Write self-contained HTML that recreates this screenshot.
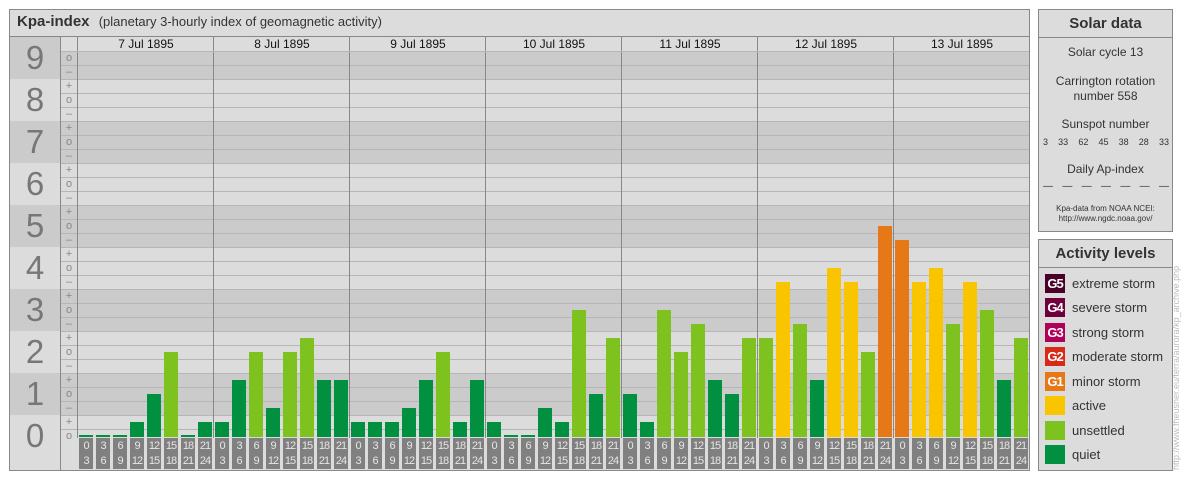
<!DOCTYPE html>
<html><head><meta charset="utf-8"><style>
*{margin:0;padding:0;box-sizing:border-box}
body{width:1184px;height:480px;background:#fff;position:relative;font-family:"Liberation Sans",sans-serif;overflow:hidden}
.abs{position:absolute}
.panel{position:absolute;background:#dcdcdc;border:1px solid #888}
.band{position:absolute;left:10px;width:1019px;height:42px}
.d{background:#cbcbcb}.l{background:#dcdcdc}
.num{position:absolute;left:10px;width:50px;text-align:center;font-size:33px;color:#777;line-height:42px}
.hl{position:absolute;left:61px;width:968px;height:1px;background:#b6b6b6}
.sg{position:absolute;left:61px;width:16px;text-align:center;font-size:11px;color:#888;line-height:14px}
.vl{position:absolute;top:37px;width:1px;height:401px;background:#888}
.date{position:absolute;top:37px;width:136px;text-align:center;font-size:12px;line-height:15px;color:#111}
#bars{position:absolute;left:78px;top:37px;width:952px;height:400px;display:flex;align-items:flex-end}
#bars div{width:14px;margin-left:1px;margin-right:2px}
.q{background:#009040}.u{background:#7dc21f}.a{background:#f9c500}.o{background:#e67817}
#tl{position:absolute;left:78px;top:438px;width:952px;height:31px;display:flex}
#tl div{width:14px;margin-left:1px;margin-right:2px;background:#808080;color:#e6e6e6;font-size:11px;line-height:15px;text-align:center;letter-spacing:-1px;padding-top:1px}
.rt{font-size:12px;color:#333;text-align:center}
.lg{position:absolute;left:1045px;width:20px;height:19px;color:#fff;font-size:13px;font-weight:bold;line-height:19px;text-align:center;letter-spacing:-1px}
.lt{position:absolute;left:1072px;font-size:13px;color:#333;line-height:19px}
</style></head><body>
<div class="panel" style="left:9px;top:9px;width:1021px;height:462px"></div>
<div class="abs" style="left:17px;top:13px;font-size:15px;font-weight:bold;color:#333">Kpa-index <span style="font-weight:normal;font-size:13px;margin-left:5px">(planetary 3-hourly index of geomagnetic activity)</span></div>
<div class="abs" style="left:10px;top:36px;width:1019px;height:1px;background:#888"></div>
<div class="band d" style="top:37px"></div>
<div class="band l" style="top:79px"></div>
<div class="band d" style="top:121px"></div>
<div class="band l" style="top:163px"></div>
<div class="band d" style="top:205px"></div>
<div class="band l" style="top:247px"></div>
<div class="band d" style="top:289px"></div>
<div class="band l" style="top:331px"></div>
<div class="band d" style="top:373px"></div>
<div class="band l" style="top:415px;height:55px"></div>
<div class="num" style="top:37px">9</div><div class="num" style="top:79px">8</div><div class="num" style="top:121px">7</div><div class="num" style="top:163px">6</div><div class="num" style="top:205px">5</div><div class="num" style="top:247px">4</div><div class="num" style="top:289px">3</div><div class="num" style="top:331px">2</div><div class="num" style="top:373px">1</div><div class="num" style="top:415px">0</div>
<div class="hl" style="top:51px"></div><div class="hl" style="top:65px"></div><div class="hl" style="top:79px"></div><div class="hl" style="top:93px"></div><div class="hl" style="top:107px"></div><div class="hl" style="top:121px"></div><div class="hl" style="top:135px"></div><div class="hl" style="top:149px"></div><div class="hl" style="top:163px"></div><div class="hl" style="top:177px"></div><div class="hl" style="top:191px"></div><div class="hl" style="top:205px"></div><div class="hl" style="top:219px"></div><div class="hl" style="top:233px"></div><div class="hl" style="top:247px"></div><div class="hl" style="top:261px"></div><div class="hl" style="top:275px"></div><div class="hl" style="top:289px"></div><div class="hl" style="top:303px"></div><div class="hl" style="top:317px"></div><div class="hl" style="top:331px"></div><div class="hl" style="top:345px"></div><div class="hl" style="top:359px"></div><div class="hl" style="top:373px"></div><div class="hl" style="top:387px"></div><div class="hl" style="top:401px"></div><div class="hl" style="top:415px"></div><div class="hl" style="top:429px"></div>
<div class="sg" style="top:51px">o</div><div class="sg" style="top:65px">–</div>
<div class="sg" style="top:79px">+</div><div class="sg" style="top:93px">o</div><div class="sg" style="top:107px">–</div>
<div class="sg" style="top:121px">+</div><div class="sg" style="top:135px">o</div><div class="sg" style="top:149px">–</div>
<div class="sg" style="top:163px">+</div><div class="sg" style="top:177px">o</div><div class="sg" style="top:191px">–</div>
<div class="sg" style="top:205px">+</div><div class="sg" style="top:219px">o</div><div class="sg" style="top:233px">–</div>
<div class="sg" style="top:247px">+</div><div class="sg" style="top:261px">o</div><div class="sg" style="top:275px">–</div>
<div class="sg" style="top:289px">+</div><div class="sg" style="top:303px">o</div><div class="sg" style="top:317px">–</div>
<div class="sg" style="top:331px">+</div><div class="sg" style="top:345px">o</div><div class="sg" style="top:359px">–</div>
<div class="sg" style="top:373px">+</div><div class="sg" style="top:387px">o</div><div class="sg" style="top:401px">–</div>
<div class="sg" style="top:415px">+</div><div class="sg" style="top:429px">o</div>
<div class="vl" style="left:60px;height:433px"></div>
<div class="vl" style="left:77px"></div>
<div class="vl" style="left:213px"></div><div class="vl" style="left:349px"></div><div class="vl" style="left:485px"></div><div class="vl" style="left:621px"></div><div class="vl" style="left:757px"></div><div class="vl" style="left:893px"></div>
<div class="abs" style="left:78px;top:37px;width:951px;height:14px;background:#dcdcdc"></div>
<div class="abs" style="left:61px;top:37px;width:16px;height:14px;background:#dcdcdc"></div>
<div class="vl" style="left:77px;height:14px"></div><div class="vl" style="left:213px;height:14px"></div><div class="vl" style="left:349px;height:14px"></div><div class="vl" style="left:485px;height:14px"></div><div class="vl" style="left:621px;height:14px"></div><div class="vl" style="left:757px;height:14px"></div><div class="vl" style="left:893px;height:14px"></div>
<div class="hl" style="top:51px"></div>
<div class="date" style="left:78px">7 Jul 1895</div><div class="date" style="left:214px">8 Jul 1895</div><div class="date" style="left:350px">9 Jul 1895</div><div class="date" style="left:486px">10 Jul 1895</div><div class="date" style="left:622px">11 Jul 1895</div><div class="date" style="left:758px">12 Jul 1895</div><div class="date" style="left:894px">13 Jul 1895</div>
<div id="bars">
<div class="q" style="height:2px"></div><div class="q" style="height:2px"></div><div class="q" style="height:2px"></div><div class="q" style="height:15px"></div><div class="q" style="height:43px"></div><div class="u" style="height:85px"></div><div class="q" style="height:2px"></div><div class="q" style="height:15px"></div>
<div class="q" style="height:15px"></div><div class="q" style="height:57px"></div><div class="u" style="height:85px"></div><div class="q" style="height:29px"></div><div class="u" style="height:85px"></div><div class="u" style="height:99px"></div><div class="q" style="height:57px"></div><div class="q" style="height:57px"></div>
<div class="q" style="height:15px"></div><div class="q" style="height:15px"></div><div class="q" style="height:15px"></div><div class="q" style="height:29px"></div><div class="q" style="height:57px"></div><div class="u" style="height:85px"></div><div class="q" style="height:15px"></div><div class="q" style="height:57px"></div>
<div class="q" style="height:15px"></div><div class="q" style="height:2px"></div><div class="q" style="height:2px"></div><div class="q" style="height:29px"></div><div class="q" style="height:15px"></div><div class="u" style="height:127px"></div><div class="q" style="height:43px"></div><div class="u" style="height:99px"></div>
<div class="q" style="height:43px"></div><div class="q" style="height:15px"></div><div class="u" style="height:127px"></div><div class="u" style="height:85px"></div><div class="u" style="height:113px"></div><div class="q" style="height:57px"></div><div class="q" style="height:43px"></div><div class="u" style="height:99px"></div>
<div class="u" style="height:99px"></div><div class="a" style="height:155px"></div><div class="u" style="height:113px"></div><div class="q" style="height:57px"></div><div class="a" style="height:169px"></div><div class="a" style="height:155px"></div><div class="u" style="height:85px"></div><div class="o" style="height:211px"></div>
<div class="o" style="height:197px"></div><div class="a" style="height:155px"></div><div class="a" style="height:169px"></div><div class="u" style="height:113px"></div><div class="a" style="height:155px"></div><div class="u" style="height:127px"></div><div class="q" style="height:57px"></div><div class="u" style="height:99px"></div>
</div>
<div id="tl">
<div>0<br>3</div><div>3<br>6</div><div>6<br>9</div><div>9<br>12</div><div>12<br>15</div><div>15<br>18</div><div>18<br>21</div><div>21<br>24</div>
<div>0<br>3</div><div>3<br>6</div><div>6<br>9</div><div>9<br>12</div><div>12<br>15</div><div>15<br>18</div><div>18<br>21</div><div>21<br>24</div>
<div>0<br>3</div><div>3<br>6</div><div>6<br>9</div><div>9<br>12</div><div>12<br>15</div><div>15<br>18</div><div>18<br>21</div><div>21<br>24</div>
<div>0<br>3</div><div>3<br>6</div><div>6<br>9</div><div>9<br>12</div><div>12<br>15</div><div>15<br>18</div><div>18<br>21</div><div>21<br>24</div>
<div>0<br>3</div><div>3<br>6</div><div>6<br>9</div><div>9<br>12</div><div>12<br>15</div><div>15<br>18</div><div>18<br>21</div><div>21<br>24</div>
<div>0<br>3</div><div>3<br>6</div><div>6<br>9</div><div>9<br>12</div><div>12<br>15</div><div>15<br>18</div><div>18<br>21</div><div>21<br>24</div>
<div>0<br>3</div><div>3<br>6</div><div>6<br>9</div><div>9<br>12</div><div>12<br>15</div><div>15<br>18</div><div>18<br>21</div><div>21<br>24</div>
</div>

<div class="panel" style="left:1038px;top:9px;width:135px;height:223px"></div>
<div class="abs" style="left:1039px;top:37px;width:133px;height:1px;background:#888"></div>
<div class="abs rt" style="left:1039px;top:15px;width:133px;font-size:15px;font-weight:bold;color:#333">Solar data</div>
<div class="abs rt" style="left:1039px;top:45px;width:133px">Solar cycle 13</div>
<div class="abs rt" style="left:1039px;top:74px;width:133px;line-height:15px">Carrington rotation<br>number 558</div>
<div class="abs rt" style="left:1039px;top:117px;width:133px">Sunspot number</div>
<div class="abs" style="left:1043px;top:137px;width:126px;display:flex;justify-content:space-between;font-size:9px;color:#333"><span>3</span><span>33</span><span>62</span><span>45</span><span>38</span><span>28</span><span>33</span></div>
<div class="abs rt" style="left:1039px;top:162px;width:133px">Daily Ap-index</div>
<div class="abs" style="left:1043px;top:181px;width:126px;display:flex;justify-content:space-between;font-size:10px;color:#333"><span>—</span><span>—</span><span>—</span><span>—</span><span>—</span><span>—</span><span>—</span></div>
<div class="abs rt" style="left:1039px;top:204px;width:133px;font-size:8px;line-height:10px">Kpa-data from NOAA NCEI:<br>http://www.ngdc.noaa.gov/</div>

<div class="panel" style="left:1038px;top:239px;width:135px;height:232px"></div>
<div class="abs" style="left:1039px;top:267px;width:133px;height:1px;background:#888"></div>
<div class="abs rt" style="left:1039px;top:245px;width:133px;font-size:15px;font-weight:bold;color:#333">Activity levels</div>
<div class="lg" style="top:274px;background:#4a0028">G5</div><div class="lt" style="top:274px">extreme storm</div>
<div class="lg" style="top:298px;background:#70003c">G4</div><div class="lt" style="top:298px">severe storm</div>
<div class="lg" style="top:323px;background:#b0005a">G3</div><div class="lt" style="top:323px">strong storm</div>
<div class="lg" style="top:347px;background:#d82a18">G2</div><div class="lt" style="top:347px">moderate storm</div>
<div class="lg" style="top:372px;background:#e67817">G1</div><div class="lt" style="top:372px">minor storm</div>
<div class="lg" style="top:396px;background:#f9c500"></div><div class="lt" style="top:396px">active</div>
<div class="lg" style="top:421px;background:#7dc21f"></div><div class="lt" style="top:421px">unsettled</div>
<div class="lg" style="top:445px;background:#009040"></div><div class="lt" style="top:445px">quiet</div>
<div class="abs" style="left:1171px;top:470px;width:230px;transform:rotate(-90deg);transform-origin:0 0;font-size:9px;color:#bbb;white-space:nowrap;line-height:11px">http://www.fheusner.eu/terra/aurora/kp_archive.php</div>
</body></html>
